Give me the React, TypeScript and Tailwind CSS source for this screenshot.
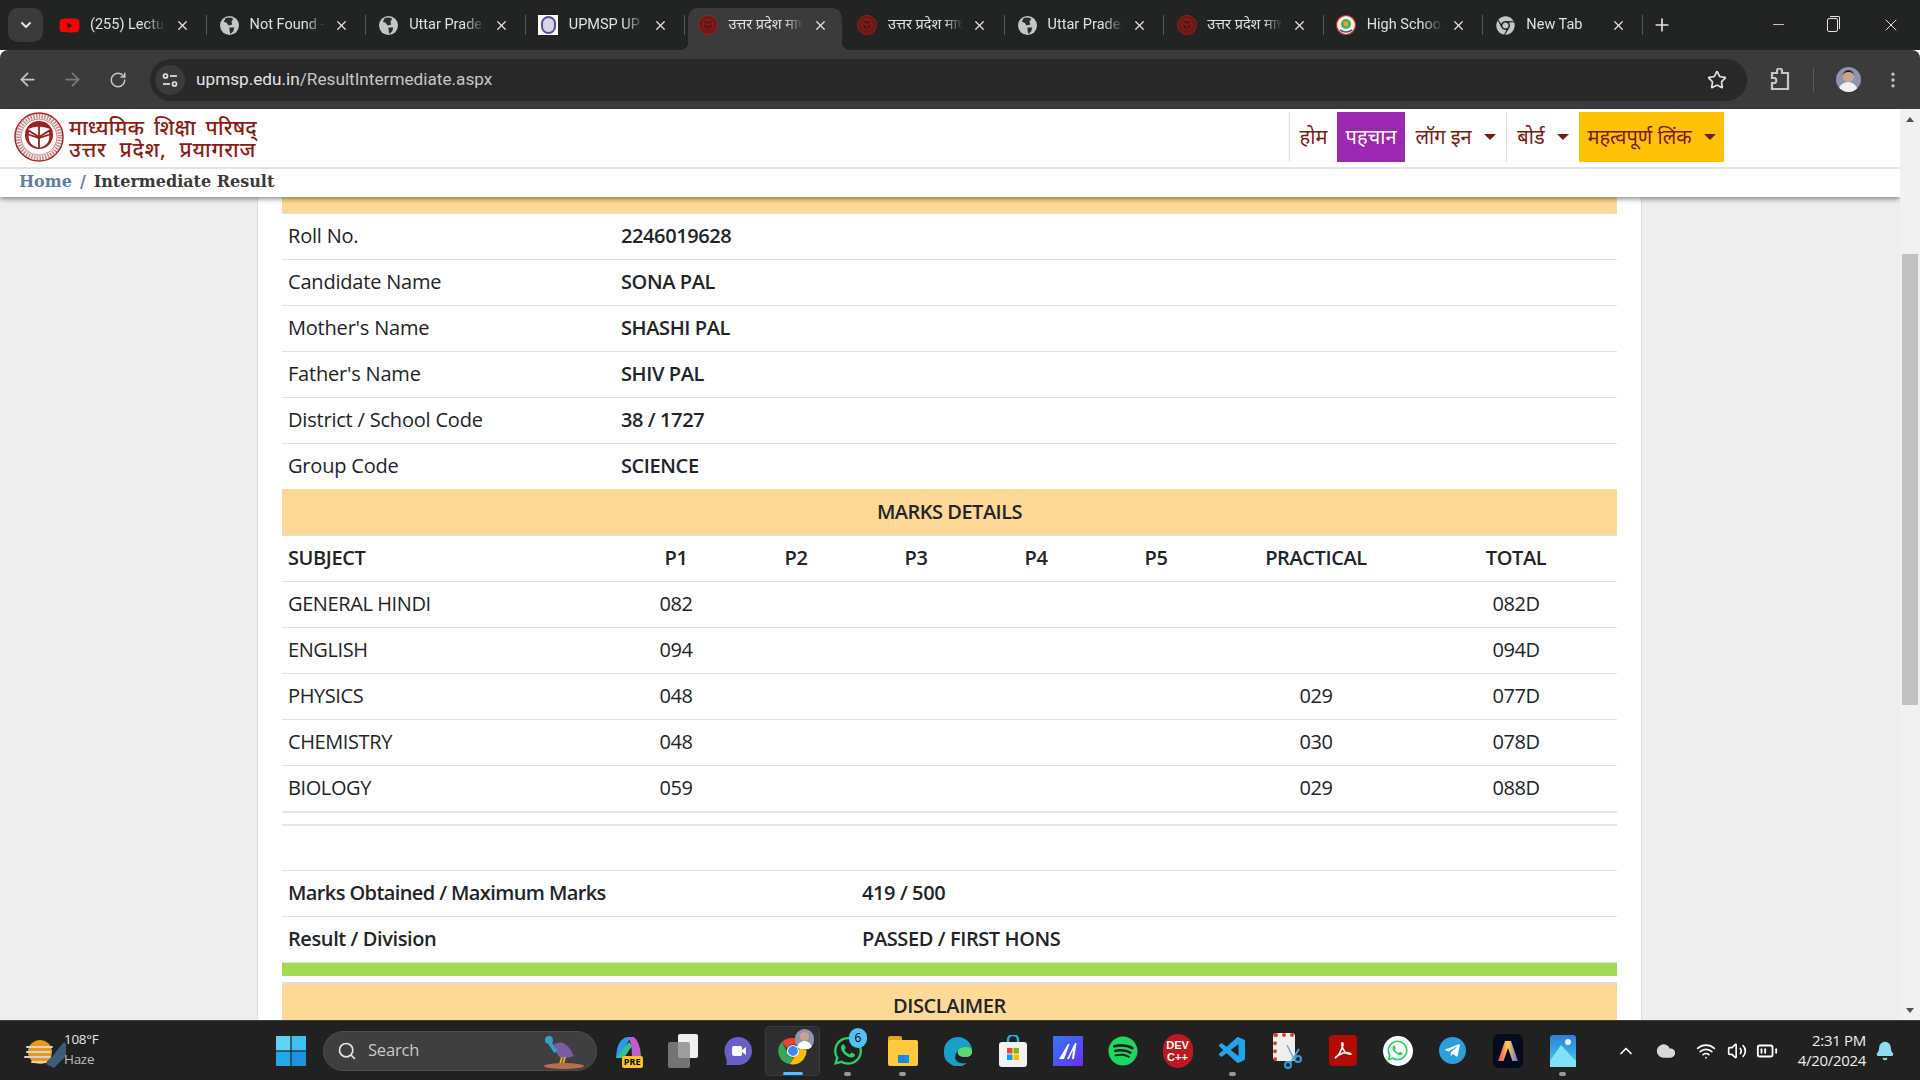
import React from "react";
import { ArrowLeft, ArrowRight, RotateCw, Star, EllipsisVertical, X, Plus, Minus, ChevronDown, ChevronUp, Search, Wifi, Volume2, BatteryMedium, Bell, Cloud } from "lucide-react";
import { FaWhatsapp, FaTelegramPlane, FaSpotify, FaYoutube, FaChrome } from "react-icons/fa";
import { VscVscode } from "react-icons/vsc";

const Emblem = ({ size = 20, ring = false }: { size?: number; ring?: boolean }) => (
  <svg width={size} height={size} viewBox="0 0 50 50" className="shrink-0">
    <circle cx="25" cy="25" r="24" fill={ring ? "#fff" : "#6e1818"} stroke="#a92626" strokeWidth="1.5" />
    {ring && <circle cx="25" cy="25" r="21" fill="none" stroke="#a92626" strokeWidth="4.5" strokeDasharray="1.6 1.2" opacity="0.55" />}
    {ring && <circle cx="25" cy="25" r="18" fill="#fff" stroke="#a92626" strokeWidth="0.6" />}
    <circle cx="25" cy="23" r="14" fill={ring ? "#a01f1f" : "#8e1c1c"} />
    <path d="M25 24 L14 17 Q25 12 36 17 Z M25 26 L15 20 Q13 30 20 34 L25 36 Z M25 26 L35 20 Q37 30 30 34 L25 36 Z" fill={ring ? "#fff" : "#5a1010"} />
    <path d="M25 13 L25 36 M13 22 L25 26 L37 22" stroke={ring ? "#a01f1f" : "#8e1c1c"} strokeWidth="1.8" fill="none" />
  </svg>
);

const tabs: { title: string; icon: string }[] = [
  { title: "(255) Lecture 12", icon: "yt" },
  { title: "Not Found - Page", icon: "globe" },
  { title: "Uttar Pradesh Board", icon: "globe" },
  { title: "UPMSP UP Board", icon: "up" },
  { title: "उत्तर प्रदेश माध्यमिक", icon: "em" },
  { title: "उत्तर प्रदेश माध्यमिक", icon: "em" },
  { title: "Uttar Pradesh Board", icon: "globe" },
  { title: "उत्तर प्रदेश माध्यमिक", icon: "em" },
  { title: "High School Result", icon: "hs" },
  { title: "New Tab", icon: "chrome" },
];

const GlobeFilled = () => (
  <svg width="19" height="19" viewBox="0 0 20 20" className="shrink-0">
    <circle cx="10" cy="10" r="10" fill="#c4c7c5" />
    <path d="M6 2 Q11 1 14 3 L12 6 L13 9 L9 10 L7 7 L4 6 Z M10 12 L15 12 L14 16 L11 19 L10 15 Z" fill="#2a2c2d" />
  </svg>
);

const TabIcon = ({ kind }: { kind: string }) => {
  if (kind === "yt") return <FaYoutube className="text-[#ff0000] shrink-0" size={21} />;
  if (kind === "globe") return <GlobeFilled />;
  if (kind === "chrome") return <FaChrome className="text-[#c4c7c5] shrink-0" size={19} />;
  if (kind === "em") return <Emblem size={20} />;
  if (kind === "up")
    return (
      <div className="w-[20px] h-[20px] bg-white flex items-center justify-center shrink-0">
        <div className="w-[15px] h-[18px] rounded-full border-2 border-[#5a4a9a] bg-[#d8d4ea]" />
      </div>
    );
  return (
    <svg width="20" height="20" viewBox="0 0 20 20" className="shrink-0">
      <circle cx="10" cy="10" r="9.5" fill="#f4efe0" stroke="#c0392b" strokeWidth="1.2" />
      <circle cx="10" cy="9" r="5" fill="#4caf50" />
      <circle cx="10" cy="9" r="2.4" fill="#e8a33d" />
      <path d="M4 15 Q10 19 16 15" stroke="#2b5fb5" strokeWidth="1.6" fill="none" />
    </svg>
  );
};

const Tab = ({ title, icon, active }: { title: string; icon: string; active: boolean }) => (
  <div className="relative w-[159.6px] h-[42px] pb-[8px] flex items-center shrink-0">
    {active && <div className="absolute inset-y-0 left-[3px] right-[3px] bg-[#3b3b3b] rounded-t-[10px]" />}
    {active && <div className="absolute -left-[5px] bottom-0 w-[8px] h-[8px] bg-[radial-gradient(circle_at_0_0,transparent_8px,#3b3b3b_8.5px)]" />}
    {active && <div className="absolute -right-[5px] bottom-0 w-[8px] h-[8px] bg-[radial-gradient(circle_at_100%_0,transparent_8px,#3b3b3b_8.5px)]" />}
    <div className="relative w-[43px] flex justify-center pl-[2px] shrink-0"><TabIcon kind={icon} /></div>
    <div className="relative w-[77px] overflow-hidden whitespace-nowrap text-[14.5px] text-[#dfe1e5] [mask-image:linear-gradient(to_right,#000_72%,transparent_98%)] font-['Roboto','Noto_Sans',sans-serif]">{title}</div>
    <div className="relative ml-[7px] w-[16px] flex justify-center"><X size={15} className="text-[#e3e3e3]" strokeWidth={2} /></div>
    {!active && <div className="absolute right-0 top-[7px] h-[20px] w-px bg-[#55585a]" />}
  </div>
);

const BrowserChrome = () => (
  <div className="shrink-0">
    <div className="h-[50px] bg-[#222424] flex items-end relative">
      <div className="w-[47px] h-full flex items-center pl-[8px] shrink-0">
        <div className="w-[35px] h-[34px] rounded-[10px] bg-[#3b3b3b] flex items-center justify-center">
          <ChevronDown size={16} strokeWidth={3} className="text-[#e3e3e3]" />
        </div>
      </div>
      {tabs.map((t, i) => (
        <Tab key={i} title={t.title} icon={t.icon} active={i === 4} />
      ))}
      <div className="h-[42px] pb-[8px] flex items-center pl-[9px]"><Plus size={20} className="text-[#e3e3e3]" strokeWidth={2} /></div>
      <div className="ml-auto h-full flex items-center text-[#e3e3e3] pb-[1px]">
        <div className="w-[56px] flex justify-center"><Minus size={17} strokeWidth={1.2} /></div>
        <div className="w-[56px] flex justify-center pr-[4px]">
          <div className="relative w-[11px] h-[14px] border border-[#e3e3e3] rounded-[2px]">
            <div className="absolute -top-[3px] left-[2px] w-[10px] h-[13px] border-t border-r border-[#e3e3e3] rounded-tr-[2px]" />
          </div>
        </div>
        <div className="w-[58px] flex justify-center"><X size={20} strokeWidth={1.2} /></div>
      </div>
    </div>
    <div className="h-[59px] bg-[#3b3b3b] rounded-t-[8px] flex items-center">
      <div className="w-[54px] flex justify-center"><ArrowLeft size={21} className="text-[#c7c7c7]" strokeWidth={2} /></div>
      <div className="w-[37px] flex justify-center"><ArrowRight size={21} className="text-[#7b7b7b]" strokeWidth={2} /></div>
      <div className="w-[54px] flex justify-center"><RotateCw size={18} className="text-[#c7c7c7]" strokeWidth={2} /></div>
      <div className="ml-[5px] w-[1597px] h-[42px] rounded-full bg-[#282828] flex items-center">
        <div className="ml-[5px] w-[30px] h-[30px] rounded-full bg-[#3b3b3b] flex items-center justify-center">
          <svg width="16" height="16" viewBox="0 0 16 16" fill="none" stroke="#e3e3e3" strokeWidth="1.7">
            <circle cx="3.5" cy="4" r="2" /><path d="M8 4 H15" />
            <circle cx="12.5" cy="12" r="2" /><path d="M1 12 H8" />
          </svg>
        </div>
        <div className="ml-[11px] pt-[1px] text-[17.2px] font-['Roboto',sans-serif] text-[#e3e3e3] whitespace-nowrap">
          upmsp.edu.in<span className="text-[#c4c7c5]">/ResultIntermediate.aspx</span>
        </div>
        <div className="ml-auto mr-[20px]"><Star size={20} className="text-[#e3e3e3]" strokeWidth={2} /></div>
      </div>
      <div className="w-[66px] flex justify-center">
        <svg width="20" height="24" viewBox="0 0 20 24" fill="none" stroke="#c7c7c7" strokeWidth="2.2">
          <path d="M2 5 H7 V3 A2 2 0 0 1 12 3 V5 H18 V21 H2 V15 H5 A3 3 0 0 0 5 10 H2 Z" />
        </svg>
      </div>
      <div className="h-[24px] w-px bg-[#5c5c5c]" />
      <div className="w-[68px] flex justify-center">
        <div className="w-[25px] h-[25px] rounded-full bg-[#8d94ad] overflow-hidden flex flex-col items-center">
          <div className="w-[11px] h-[12px] rounded-full bg-[#c9a58d] mt-[3px] border-t-2 border-[#2a2320]" />
          <div className="w-[20px] h-[10px] rounded-t-full bg-[#f1f1f1]" />
        </div>
      </div>
      <EllipsisVertical size={20} className="text-[#c7c7c7] ml-[1px]" />
    </div>
  </div>
);

const Caret = () => <span className="ml-[12px] w-0 h-0 border-x-[6px] border-x-transparent border-t-[6px] border-t-[#7a1c0e] inline-block" />;

const NavItem = ({ className, w, children }: { className?: string; w: string; children: React.ReactNode }) => (
  <div className={`h-[50px] flex items-center justify-center whitespace-nowrap ${w} ${className ?? ""}`}>{children}</div>
);

const Header = () => (
  <div className="relative z-20 bg-white shadow-[0_2px_5px_rgba(0,0,0,0.45)] shrink-0">
    <div className="h-[60px] pb-[2px] flex items-center border-b-2 border-[#e5e5e5]">
      <div className="ml-[14px] flex items-center">
        <Emblem size={50} ring />
        <div className="ml-[5px] pt-[2px] text-[#8c1c13] text-[21px] leading-[22px] font-['Noto_Sans','DejaVu_Sans',serif] font-medium">
          <div className="whitespace-nowrap tracking-[0.2px] [word-spacing:4px]">माध्यमिक शिक्षा परिषद्</div>
          <div className="whitespace-nowrap tracking-[0.7px] [word-spacing:7px]">उत्तर प्रदेश, प्रयागराज</div>
        </div>
      </div>
      <div className="ml-auto mr-[176px] flex items-center text-[20px] text-[#7a1c0e] font-['Noto_Sans','DejaVu_Sans',sans-serif]">
        <NavItem w="w-[48px]" className="border-l border-[#dddddd]">होम</NavItem>
        <NavItem w="w-[68px]" className="bg-[#9c27b0] text-white">पहचान</NavItem>
        <NavItem w="w-[101px]">लॉग इन<Caret /></NavItem>
        <NavItem w="w-[73px]" className="border-l border-[#dddddd]">बोर्ड<Caret /></NavItem>
        <NavItem w="w-[145px]" className="bg-[#ffc107]">महत्वपूर्ण लिंक<Caret /></NavItem>
      </div>
    </div>
    <div className="h-[28px] pb-[2px] flex items-center pl-[19px] text-[16px] font-bold font-['DejaVu_Serif',serif]">
      <span className="text-[#5f7ea3]">Home</span>
      <span className="text-[#5f7ea3] ml-[8px]">/</span>
      <span className="text-[#3a3a3a] ml-[8px]">Intermediate Result</span>
    </div>
  </div>
);

const Row = ({ label, value }: { label: string; value: string }) => (
  <div className="h-[46px] pb-[2px] border-t border-[#dee2e6] flex items-center px-[6px]">
    <div className="w-[333px] tracking-[-0.2px]">{label}</div>
    <div className="font-semibold">{value}</div>
  </div>
);

const marks: string[][] = [
  ["GENERAL HINDI", "082", "", "082D"],
  ["ENGLISH", "094", "", "094D"],
  ["PHYSICS", "048", "029", "077D"],
  ["CHEMISTRY", "048", "030", "078D"],
  ["BIOLOGY", "059", "029", "088D"],
];

const gridCols = "grid grid-cols-[334px_120px_120px_120px_120px_120px_200px_200px] items-center text-center h-[46px] pb-[2px] border-t border-[#dee2e6]";

const Content = () => (
  <div className="flex-1 min-h-0 overflow-hidden bg-[#eeeeee] relative">
    <div className="ml-[257px] mr-[258px] h-full bg-white border-x border-[#dddddd] px-[24px] text-[20px] text-[#212529] font-['Open_Sans',sans-serif] tracking-[-0.4px]">
      <div className="h-[16px] bg-[#fed995]" />
      <Row label="Roll No." value="2246019628" />
      <Row label="Candidate Name" value="SONA PAL" />
      <Row label="Mother's Name" value="SHASHI PAL" />
      <Row label="Father's Name" value="SHIV PAL" />
      <Row label="District / School Code" value="38 / 1727" />
      <Row label="Group Code" value="SCIENCE" />
      <div className="h-[46px] bg-[#fed995] flex items-center justify-center font-semibold tracking-[-0.5px]">MARKS DETAILS</div>
      <div className={`${gridCols} font-semibold`}>
        <div className="text-left pl-[6px]">SUBJECT</div>
        <div>P1</div><div>P2</div><div>P3</div><div>P4</div><div>P5</div>
        <div>PRACTICAL</div><div>TOTAL</div>
      </div>
      {marks.map((m) => (
        <div key={m[0]} className={gridCols}>
          <div className="text-left pl-[6px]">{m[0]}</div>
          <div>{m[1]}</div><div /><div /><div /><div />
          <div>{m[2]}</div><div>{m[3]}</div>
        </div>
      ))}
      <div className="h-[13px] border-t-2 border-[#e4e6e9]" />
      <div className="h-[46px] border-t-2 border-[#e4e6e9]" />
      <div className="h-[46px] pb-[2px] border-t border-[#dee2e6] flex items-center px-[6px] font-semibold">
        <div className="w-[574px] tracking-[-0.6px]">Marks Obtained / Maximum Marks</div>
        <div>419 / 500</div>
      </div>
      <div className="h-[46px] pb-[2px] border-t border-[#dee2e6] flex items-center px-[6px] font-semibold">
        <div className="w-[574px]">Result / Division</div>
        <div>PASSED / FIRST HONS</div>
      </div>
      <div className="h-[14px] border-t border-[#dee2e6] bg-[#a0dd53]" />
      <div className="h-[6px]" />
      <div className="h-[46px] border-t-2 border-[#dfdfdf] bg-[#fed995] flex items-center justify-center font-semibold">DISCLAIMER</div>
    </div>
  </div>
);

const Scrollbar = () => (
  <div className="w-[20px] shrink-0 bg-[#f1f1f1] flex flex-col items-center z-30">
    <div className="h-[20px] flex items-center justify-center"><div className="w-0 h-0 border-x-[4px] border-x-transparent border-b-[5px] border-b-[#505050]" /></div>
    <div className="h-[125px] shrink-0" />
    <div className="w-[16px] h-[451px] shrink-0 bg-[#c1c1c1]" />
    <div className="flex-1" />
    <div className="h-[20px] flex items-center justify-center"><div className="w-0 h-0 border-x-[4px] border-x-transparent border-t-[5px] border-t-[#505050]" /></div>
  </div>
);

const Slot = ({ children, dot, active }: { children: React.ReactNode; dot?: boolean; active?: boolean }) => (
  <div className={`relative w-[55px] h-[50px] flex items-center justify-center shrink-0 ${active ? "bg-[#2e2e2e] rounded-[4px] border border-[#3a3a3a]" : ""}`}>
    {children}
    {dot && <div className="absolute bottom-[0px] w-[7px] h-[4px] rounded-full bg-[#9a9a9a]" />}
    {active && <div className="absolute bottom-[0px] w-[20px] h-[3px] rounded-full bg-[#4cc2ff]" />}
  </div>
);

const Taskbar = () => (
  <div className="h-[60px] shrink-0 bg-[#212121] border-t border-[#3d3d3d] flex items-center relative text-white font-['Open_Sans',sans-serif]">
    <div className="w-[264px] shrink-0 flex items-center pl-[24px]">
      <svg width="44" height="42" viewBox="0 0 44 42" className="shrink-0">
        <circle cx="16" cy="22" r="12" fill="#e59a1c" />
        <path d="M22 34 L40 12 L42 14 L42 26 L30 38 Z" fill="#3f5b7c" />
        <path d="M3 17 H28 M3 22 H26 M1 27 H26 M8 32 H22" stroke="#d9d3c4" strokeWidth="2" strokeLinecap="round" />
      </svg>
      <div className="-ml-[4px] -mt-[3px] text-[13.5px] leading-[20px] text-[#e6e6e6] tracking-[-0.3px]">
        <div>108°F</div>
        <div className="text-[#bdbdbd]">Haze</div>
      </div>
    </div>
    <div className="w-[54px] flex justify-center shrink-0">
      <svg width="30" height="30" viewBox="0 0 30 30">
        <rect x="0" y="0" width="14.4" height="14.4" fill="#5fd3f7" />
        <rect x="15.6" y="0" width="14.4" height="14.4" fill="#3fc0f2" />
        <rect x="0" y="15.6" width="14.4" height="14.4" fill="#22a8ea" />
        <rect x="15.6" y="15.6" width="14.4" height="14.4" fill="#1b93e3" />
      </svg>
    </div>
    <div className="ml-[5px] w-[274px] h-[40px] rounded-full bg-[#3f3f3f] border border-[#4d4d4d] flex items-center pl-[13px] shrink-0 relative">
      <Search size={20} className="text-[#e5e5e5]" strokeWidth={2} />
      <span className="ml-[11px] -mt-[1px] text-[16.5px] text-[#c9c9c9] tracking-[-0.2px]">Search</span>
      <svg width="50" height="38" viewBox="0 0 50 38" className="absolute right-[10px] top-0">
        <path d="M18 12 Q30 6 38 24 Q28 28 22 24 Z" fill="#7b5aa6" />
        <circle cx="13" cy="8" r="4" fill="#3c9bc9" />
        <path d="M14 11 L20 20" stroke="#3c9bc9" strokeWidth="4" />
        <path d="M26 25 L24 32 M29 25 L27 32" stroke="#e0a82e" strokeWidth="2" />
        <ellipse cx="28" cy="34" rx="20" ry="3" fill="#b4704a" />
      </svg>
    </div>
    <div className="ml-[3px] flex items-center shrink-0">
      <Slot>
        <div className="relative w-[30px] h-[34px]">
          <svg width="30" height="30" viewBox="0 0 30 30">
            <path d="M3 24 Q4 4 15 3 L21 3 Q12 6 11 24 Z" fill="#2b9be8" />
            <path d="M15 3 L21 3 Q27 8 28 22 L19 24 Q19 8 15 3Z" fill="#c45ad0" />
            <path d="M3 24 L11 24 L19 12 L16 8 Z" fill="#35c28f" />
          </svg>
          <span className="absolute bottom-0 right-0 bg-[#f7c325] text-black text-[9px] font-bold leading-[12px] px-[2px] rounded-[2px]">PRE</span>
        </div>
      </Slot>
      <Slot>
        <div className="relative w-[30px] h-[34px]">
          <div className="absolute right-0 top-0 w-[20px] h-[24px] bg-[#f0f0f0] rounded-[2px]" />
          <div className="absolute left-0 bottom-0 w-[22px] h-[26px] bg-[#8a8a8a]/80 rounded-[2px]" />
        </div>
      </Slot>
      <Slot>
        <svg width="30" height="30" viewBox="0 0 30 30">
          <path d="M15 1 A14 14 0 0 1 29 15 A14 14 0 0 1 15 29 L3 29 Q5 26 2 19 A14 14 0 0 1 15 1Z" fill="#6a5fc9" />
          <rect x="9" y="10" width="10" height="10" rx="2" fill="#fff" />
          <path d="M19 14 L23 11 V19 L19 16Z" fill="#fff" />
        </svg>
      </Slot>
      <Slot active>
        <svg width="32" height="32" viewBox="0 0 32 32">
          <path d="M16 3 A13 13 0 0 1 27.3 9.5 H16 A6.5 6.5 0 0 0 10 13.5 L5 7 A13 13 0 0 1 16 3Z" fill="#ea4335" />
          <path d="M5 7 L10.5 17 A6.5 6.5 0 0 0 16.5 22.5 L13 29 A13 13 0 0 1 5 7Z" fill="#34a853" />
          <path d="M27.3 9.5 A13 13 0 0 1 13 29 L19 19 A6.5 6.5 0 0 0 21 9.5Z" fill="#fbbc04" />
          <circle cx="16" cy="16" r="5.5" fill="#4285f4" stroke="#fff" strokeWidth="1.2" />
        </svg>
        <div className="absolute top-[2px] right-[5px] w-[19px] h-[21px] rounded-full bg-[#8d94ad] overflow-hidden flex flex-col items-center">
          <div className="w-[9px] h-[9px] rounded-full bg-[#c9a58d] mt-[3px]" />
          <div className="w-[15px] h-[8px] bg-white rounded-t-full" />
        </div>
      </Slot>
      <Slot dot>
        <FaWhatsapp size={32} className="text-[#25d366]" />
        <div className="absolute top-[2px] right-[8px] w-[18px] h-[20px] rounded-full bg-[#4fc3f7] text-black text-[12px] leading-[20px] text-center">6</div>
      </Slot>
      <Slot dot>
        <div className="relative w-[30px] h-[30px]">
          <div className="absolute top-0 left-0 w-[14px] h-[6px] bg-[#e8a614] rounded-t-[2px]" />
          <div className="absolute top-[4px] left-0 w-[30px] h-[26px] bg-[#ffc83d] rounded-[2px]" />
          <div className="absolute bottom-[3px] left-[10px] w-[11px] h-[8px] bg-[#1a8ae0]" />
        </div>
      </Slot>
      <Slot>
        <svg width="30" height="30" viewBox="0 0 30 30">
          <path d="M15 1 A14 14 0 0 1 29 16 Q29 21 22 21 Q13 21 15 14 Q12 18 12 22 Q14 29 24 27 A14 14 0 0 1 1 15 A14 14 0 0 1 15 1Z" fill="#1aa0c8" />
          <path d="M29 16 Q29 21 22 21 Q13 21 15 14 Q18 11 23 11 Q29 11 29 16Z" fill="#5fd96b" />
        </svg>
      </Slot>
      <Slot>
        <svg width="30" height="32" viewBox="0 0 30 32">
          <path d="M10 8 V5 A5 5 0 0 1 20 5 V8" stroke="#2fa4e7" strokeWidth="2.4" fill="none" />
          <rect x="1" y="7" width="28" height="25" rx="3" fill="#f2f2f2" />
          <rect x="9" y="13" width="5.5" height="5.5" fill="#e8492f" />
          <rect x="15.5" y="13" width="5.5" height="5.5" fill="#7fba00" />
          <rect x="9" y="19.5" width="5.5" height="5.5" fill="#00a4ef" />
          <rect x="15.5" y="19.5" width="5.5" height="5.5" fill="#ffb900" />
        </svg>
      </Slot>
      <Slot>
        <div className="w-[30px] h-[30px] bg-[linear-gradient(135deg,#2f7bf6,#6b2ff0)] flex items-center justify-center">
          <svg width="20" height="20" viewBox="0 0 20 20"><path d="M1 18 L10 3 L11.5 3 L6 18 Z M9 18 L17 2 L18.5 2 L16 18 L14 18 L15 9 L11 18Z" fill="#fff" /></svg>
        </div>
      </Slot>
      <Slot><FaSpotify size={30} className="text-[#1ed760]" /></Slot>
      <Slot>
        <div className="w-[30px] h-[34px] rounded-full bg-[#c1181f] flex flex-col items-center justify-center text-white font-bold text-[11px] leading-[12px] font-['Liberation_Sans',sans-serif]">
          <span>DEV</span><span>C++</span>
        </div>
      </Slot>
      <Slot dot><VscVscode size={32} className="text-[#23a3ea]" /></Slot>
      <Slot>
        <div className="relative w-[30px] h-[36px]">
          <div className="absolute left-0 top-0 w-[22px] h-[28px] bg-[#eeeeee] rounded-[3px] border-l-[4px] border-t-[4px] border-dotted border-[#e1401f]" />
          <svg width="20" height="24" viewBox="0 0 20 24" className="absolute right-0 bottom-0">
            <path d="M4 0 L12 16 M16 4 L7 18" stroke="#7fa6c8" strokeWidth="1.5" />
            <circle cx="5" cy="20" r="3" fill="none" stroke="#2aa0e8" strokeWidth="2" />
            <circle cx="15" cy="14" r="3" fill="none" stroke="#2aa0e8" strokeWidth="2" />
          </svg>
        </div>
      </Slot>
      <Slot>
        <div className="w-[28px] h-[31px] rounded-[4px] bg-[#b30b00] flex items-center justify-center">
          <svg width="20" height="20" viewBox="0 0 20 20"><path d="M2 17 Q7 14 10 4 Q10 1 9 2 Q8 5 12 11 Q15 14 18 13 Q16 11 10 12 Q5 14 2 17Z" fill="none" stroke="#fff" strokeWidth="1.6" /></svg>
        </div>
      </Slot>
      <Slot>
        <div className="w-[30px] h-[30px] rounded-full bg-white flex items-center justify-center"><FaWhatsapp size={23} className="text-[#25d366]" /></div>
      </Slot>
      <Slot>
        <div className="w-[27px] h-[27px] rounded-full bg-[#2b9fd9] flex items-center justify-center"><FaTelegramPlane size={17} className="text-white" /></div>
      </Slot>
      <Slot>
        <div className="w-[30px] h-[34px] rounded-[6px] bg-[#050a1e] flex items-center justify-center">
          <svg width="20" height="22" viewBox="0 0 20 22"><defs><linearGradient id="adobeA" x1="0" y1="0" x2="1" y2="0"><stop offset="0" stopColor="#ff3d6e" /><stop offset="0.5" stopColor="#ffd23f" /><stop offset="1" stopColor="#6d5bff" /></linearGradient></defs><path d="M7 1 H13 L20 21 H14.5 L10 8 L5.5 21 H0 Z" fill="url(#adobeA)" /></svg>
        </div>
      </Slot>
      <Slot dot>
        <svg width="26" height="32" viewBox="0 0 26 32">
          <defs><linearGradient id="photosG" x1="0" y1="0" x2="0" y2="1"><stop offset="0" stopColor="#2e7fd9" /><stop offset="1" stopColor="#3fd0f2" /></linearGradient></defs>
          <rect width="26" height="32" rx="3" fill="url(#photosG)" />
          <circle cx="18" cy="7" r="3" fill="#f3e9ff" />
          <path d="M0 26 L11 10 L26 26 V32 H0Z" fill="#7fe3f5" />
        </svg>
      </Slot>
    </div>
    <div className="ml-[16px] flex items-center shrink-0">
      <div className="w-[40px] flex justify-center"><ChevronUp size={20} strokeWidth={2} /></div>
      <div className="w-[40px] flex justify-center"><Cloud size={20} fill="#d8d8d8" className="text-[#d8d8d8]" /></div>
      <div className="w-[40px] flex justify-center"><Wifi size={20} /></div>
      <div className="w-[22px] flex justify-center"><Volume2 size={20} /></div>
      <div className="w-[38px] flex justify-center"><BatteryMedium size={22} /></div>
      <div className="w-[80px] -mt-[2px] text-right text-[15px] leading-[20px] text-[#efefef] tracking-[-0.3px]">
        <div>2:31 PM</div>
        <div>4/20/2024</div>
      </div>
      <div className="ml-[9px]"><Bell size={20} fill="#8fdcf7" className="text-[#8fdcf7]" /></div>
    </div>
  </div>
);

export default function App() {
  return (
    <div className="w-[1920px] h-[1080px] overflow-hidden flex flex-col bg-white">
      <BrowserChrome />
      <div className="flex-1 min-h-0 flex">
        <div className="flex-1 min-w-0 flex flex-col">
          <Header />
          <Content />
        </div>
        <Scrollbar />
      </div>
      <Taskbar />
    </div>
  );
}
